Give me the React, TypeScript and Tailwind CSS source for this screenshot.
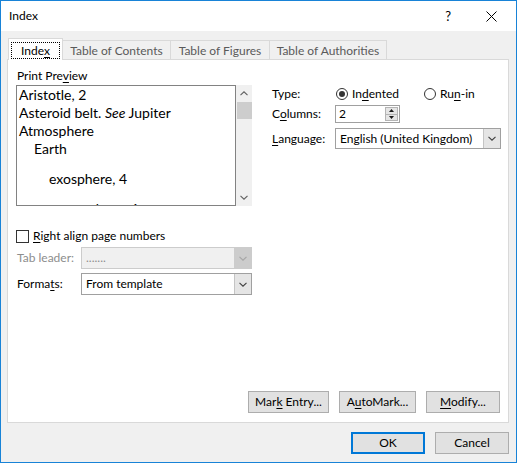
import React from "react";

const Chev = ({ up = false, color = "#606060" }: { up?: boolean; color?: string }) => (
  <svg width="8" height="5" viewBox="0 0 8 5" className="block">
    <path
      d={up ? "M0.5 4.2 L4 0.8 L7.5 4.2" : "M0.5 0.8 L4 4.2 L7.5 0.8"}
      fill="none"
      stroke={color}
      strokeWidth="1.1"
    />
  </svg>
);

const Tri = ({ up = false }: { up?: boolean }) => (
  <svg width="5" height="3" viewBox="0 0 5 3" className="block">
    <path d={up ? "M0 3 L2.5 0 L5 3 Z" : "M0 0 L2.5 3 L5 0 Z"} fill="#1a1a1a" />
  </svg>
);

const Btn = ({ w, children, primary = false }: { w: string; children: React.ReactNode; primary?: boolean }) => (
  <div
    className={`${w} h-[22px] flex items-center justify-center bg-[#e1e1e1] ${
      primary ? "border-2 border-[#0078d7]" : "border border-[#adadad]"
    }`}
  >
    <span className="whitespace-pre">{children}</span>
  </div>
);

export default function App() {
  return (
    <div className="w-[517px] h-[463px] border border-[#1883d7] flex flex-col font-['Lato','Noto_Sans',sans-serif] text-[12px] text-black leading-[16px] overflow-hidden">
      {/* title bar */}
      <div className="h-[30px] shrink-0 bg-white flex items-center pl-[8px]">
        <span className="text-[12px]">Index</span>
        <span className="ml-auto text-[13px] mr-[35px]">?</span>
        <svg width="11" height="11" viewBox="0 0 11 11" className="mr-[19px]">
          <path d="M0.5 0.5 L10.5 10.5 M10.5 0.5 L0.5 10.5" stroke="#000" strokeWidth="1" />
        </svg>
      </div>

      {/* body */}
      <div className="flex-1 bg-[#f0f0f0] flex flex-col px-[6px] pt-[7px]">
        {/* tabs */}
        <div className="flex items-end h-[22px] pl-px">
          <div className="relative z-10 w-[55px] h-[22px] bg-white border-l border-t border-r border-[#d9d9d9] pt-[3px] px-[2px]">
            <div className="h-[17px] border border-dotted border-black flex items-center justify-center">
              <span>
                Inde<u className="underline-offset-2">x</u>
              </span>
            </div>
          </div>
          <div className="-ml-px w-[109px] h-[20px] bg-[#f0f0f0] border-l border-t border-r border-[#d9d9d9] flex items-center justify-center text-[#5a5a5a]">
            Table of Contents
          </div>
          <div className="-ml-px w-[100px] h-[20px] bg-[#f0f0f0] border-l border-t border-r border-[#d9d9d9] flex items-center justify-center text-[#5a5a5a]">
            Table of Figures
          </div>
          <div className="-ml-px w-[118px] h-[20px] bg-[#f0f0f0] border-l border-t border-r border-[#d9d9d9] flex items-center justify-center text-[#5a5a5a]">
            Table of Authorities
          </div>
        </div>

        {/* panel */}
        <div className="-mt-px w-[502px] h-[364px] bg-white border border-[#d9d9d9] flex flex-col">
          <div className="flex pl-[8px] pt-[8px]">
            {/* left column */}
            <div className="w-[236px] flex flex-col">
              <div className="h-[16px] pl-px">
                Print Pre<u className="underline-offset-2">v</u>iew
              </div>
              <div className="mt-px flex h-[121px]">
                <div className="w-[220px] h-full border border-[#828282] bg-white overflow-hidden pl-[2px] font-['Lato',sans-serif] text-[14px] leading-[18px]">
                  <div>Aristotle, 2</div>
                  <div>
                    Asteroid belt. <i>See</i> Jupiter
                  </div>
                  <div>Atmosphere</div>
                  <div className="pl-[15px]">Earth</div>
                  <div className="pl-[30px] mt-[12px]">exosphere, 4</div>
                  <div className="pl-[30px] mt-[12px]">mesosphere, 4</div>
                </div>
                <div className="w-[16px] h-full bg-[#f0f0f0] flex flex-col items-center">
                  <div className="h-[17px] flex items-center justify-center">
                    <Chev up />
                  </div>
                  <div className="w-[15px] h-[17px] bg-[#cdcdcd]" />
                  <div className="mt-auto h-[17px] flex items-center justify-center">
                    <Chev />
                  </div>
                </div>
              </div>

              <div className="mt-[22px] h-[16px] flex items-center">
                <div className="w-[13px] h-[13px] border border-[#333333] bg-white" />
                <span className="ml-[4px]">
                  <u className="underline-offset-2">R</u>ight align page numbers
                </span>
              </div>

              <div className="mt-[3px] h-[22px] flex items-center">
                <div className="w-[65px] pl-px text-[#8d8d8d]">Tab leader:</div>
                <div className="w-[171px] h-[22px] flex border border-[#cccccc] bg-[#f0f0f0]">
                  <div className="flex-1 pl-[4px] flex items-center text-[#8d8d8d]">.......</div>
                  <div className="w-[17px] h-full bg-[#cccccc] flex items-center justify-center">
                    <Chev color="#a6a6a6" />
                  </div>
                </div>
              </div>

              <div className="mt-[4px] h-[22px] flex items-center">
                <div className="w-[65px] pl-px">
                  Forma<u className="underline-offset-2">t</u>s:
                </div>
                <div className="w-[171px] h-[22px] flex border border-[#a0a0a0] bg-white">
                  <div className="flex-1 pl-[4px] flex items-center">From template</div>
                  <div className="w-[17px] h-full bg-[#e5e5e5] border-l border-[#c4c4c4] flex items-center justify-center">
                    <Chev color="#404040" />
                  </div>
                </div>
              </div>
            </div>

            {/* right column */}
            <div className="ml-[20px] flex flex-col">
              <div className="mt-[18px] h-[16px] flex items-center">
                <div className="w-[63px]">Type:</div>
                <div className="w-[89px] flex items-center pl-px">
                  <div className="w-[12px] h-[12px] rounded-full border border-[#333333] flex items-center justify-center">
                    <div className="w-[6px] h-[6px] rounded-full bg-[#333333]" />
                  </div>
                  <span className="ml-[4px]">
                    In<u className="underline-offset-2">d</u>ented
                  </span>
                </div>
                <div className="flex items-center">
                  <div className="w-[12px] h-[12px] rounded-full border border-[#333333]" />
                  <span className="ml-[4px]">
                    Ru<u className="underline-offset-2">n</u>-in
                  </span>
                </div>
              </div>

              <div className="mt-[3px] h-[18px] flex items-center">
                <div className="w-[63px]">
                  C<u className="underline-offset-2">o</u>lumns:
                </div>
                <div className="w-[65px] h-[18px] flex border border-[#a0a0a0] bg-white">
                  <div className="flex-1 pl-[3px] flex items-center">2</div>
                  <div className="w-[14px] flex flex-col py-px pr-px">
                    <div className="flex-1 bg-[#e5e5e5] border border-[#b4b4b4] flex items-center justify-center">
                      <Tri up />
                    </div>
                    <div className="flex-1 bg-[#e5e5e5] border border-[#b4b4b4] border-t-0 flex items-center justify-center">
                      <Tri />
                    </div>
                  </div>
                </div>
              </div>

              <div className="mt-[5px] h-[21px] flex items-center">
                <div className="w-[63px]">
                  <u className="underline-offset-2">L</u>anguage:
                </div>
                <div className="w-[166px] h-[21px] flex border border-[#a0a0a0] bg-white">
                  <div className="flex-1 pl-[4px] flex items-center">English (United Kingdom)</div>
                  <div className="w-[17px] h-full bg-[#e5e5e5] border-l border-[#c4c4c4] flex items-center justify-center">
                    <Chev color="#404040" />
                  </div>
                </div>
              </div>
            </div>
          </div>

          {/* panel buttons */}
          <div className="mt-auto flex justify-end gap-[10px] pr-[8px] pb-[9px]">
            <Btn w="w-[81px]">
              Mar<u className="underline-offset-2">k</u> Entry...
            </Btn>
            <Btn w="w-[77px]">
              A<u className="underline-offset-2">u</u>toMark...
            </Btn>
            <Btn w="w-[74px]">
              <u className="underline-offset-2">M</u>odify...
            </Btn>
          </div>
        </div>

        {/* footer */}
        <div className="mt-[9px] w-[502px] flex justify-end gap-[10px]">
          <Btn w="w-[74px]" primary>
            OK
          </Btn>
          <Btn w="w-[74px]">Cancel</Btn>
        </div>
      </div>
    </div>
  );
}
